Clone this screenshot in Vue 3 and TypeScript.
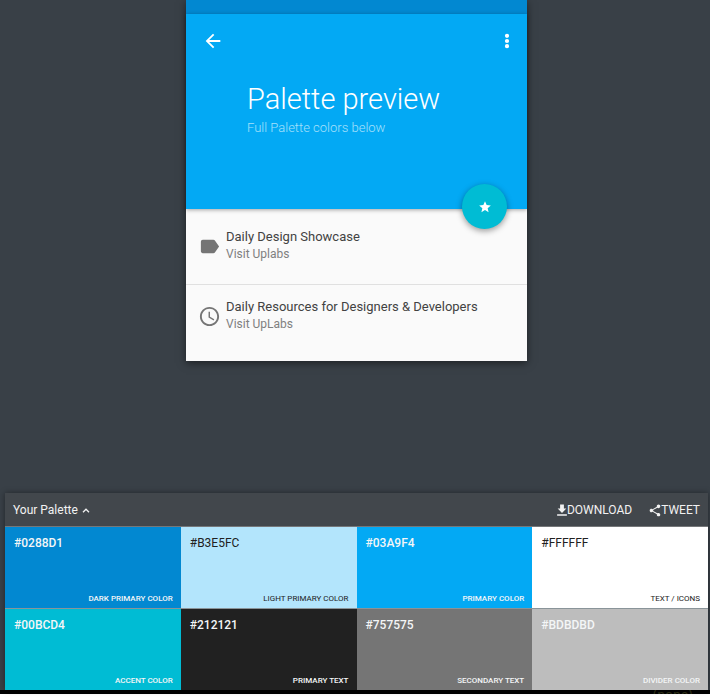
<script setup lang="ts">
interface Swatch {
  hex: string
  role: string
  tone: string
}

interface Entry {
  title: string
  note: string
  icon: string
}

const swatches: Swatch[] = [
  { hex: '#0288D1', role: 'Dark primary color', tone: 'light' },
  { hex: '#B3E5FC', role: 'Light primary color', tone: 'dark' },
  { hex: '#03A9F4', role: 'Primary color', tone: 'light' },
  { hex: '#FFFFFF', role: 'Text / Icons', tone: 'dark' },
  { hex: '#00BCD4', role: 'Accent color', tone: 'light' },
  { hex: '#212121', role: 'Primary text', tone: 'light' },
  { hex: '#757575', role: 'Secondary text', tone: 'light' },
  { hex: '#BDBDBD', role: 'Divider color', tone: 'light' },
]

const entries: Entry[] = [
  {
    title: 'Daily Design Showcase',
    note: 'Visit Uplabs',
    icon: 'M17.63 5.84C17.27 5.33 16.67 5 16 5L5 5.01C3.9 5.01 3 5.9 3 7v10c0 1.1.9 1.99 2 1.99L16 19c.67 0 1.27-.33 1.63-.84L22 12l-4.37-6.16z',
  },
  {
    title: 'Daily Resources for Designers & Developers',
    note: 'Visit UpLabs',
    icon: 'M11.99 2C6.47 2 2 6.48 2 12s4.47 10 9.99 10C17.52 22 22 17.52 22 12S17.52 2 11.99 2zM12 20c-4.42 0-8-3.58-8-8s3.58-8 8-8 8 3.58 8 8-3.58 8-8 8zm.5-13H11v6l5.25 3.15.75-1.23-4.5-2.67z',
  },
]
</script>

<template>
  <div class="page">
    <main class="stage">
      <section class="phone">
        <div class="status"></div>
        <header class="hero">
          <nav class="bar">
            <button class="icon-button" type="button" aria-label="Back">
              <svg viewBox="0 0 24 24" width="22" height="22"><path d="M20 11H7.83l5.59-5.59L12 4l-8 8 8 8 1.41-1.41L7.83 13H20v-2z" /></svg>
            </button>
            <button class="icon-button" type="button" aria-label="More">
              <svg viewBox="0 0 24 24" width="22" height="22"><path d="M12 8.6a2.3 2.3 0 1 0 0-4.6 2.3 2.3 0 0 0 0 4.6zm0 1.1a2.3 2.3 0 1 0 0 4.6 2.3 2.3 0 0 0 0-4.6zm0 5.7a2.3 2.3 0 1 0 0 4.6 2.3 2.3 0 0 0 0-4.6z" /></svg>
            </button>
          </nav>
          <h1>Palette preview</h1>
          <p>Full Palette colors below</p>
          <button class="fab" type="button" aria-label="Favorite">
            <svg viewBox="0 0 24 24" width="14" height="14"><path d="M12 17.27 18.18 21l-1.64-7.03L22 9.24l-7.19-.61L12 2 9.19 8.63 2 9.24l5.46 4.73L5.82 21z" /></svg>
          </button>
        </header>
        <ul class="entries">
          <li v-for="entry in entries" :key="entry.title">
            <svg viewBox="0 0 24 24" width="23" height="23"><path :d="entry.icon" /></svg>
            <div>
              <h2>{{ entry.title }}</h2>
              <a href="#">{{ entry.note }}</a>
            </div>
          </li>
        </ul>
      </section>
    </main>

    <section class="palette">
      <header class="palette-head">
        <button class="action toggle" type="button">
          Your Palette
          <svg viewBox="0 0 8 5" width="8" height="5"><path d="M1 4.2 4 1.2l3 3" /></svg>
        </button>
        <button class="action" type="button">
          <svg viewBox="3 0 18 24" width="10" height="13"><path d="M20 8.500h-4.500V1h-7v7.500H4l8 8 8-8zM3 19v2.500h18V19H3z" /></svg>DOWNLOAD
        </button>
        <button class="action" type="button">
          <svg viewBox="2 1 20 22" width="12" height="13"><path d="M18 16.080c-.76 0-1.440.3-1.960.770L8.910 12.700c.05-.23.09-.46.09-.7s-.04-.47-.09-.7l7.050-4.110c.54.5 1.250.81 2.040.81 1.660 0 3-1.340 3-3s-1.340-3-3-3-3 1.340-3 3c0 .24.04.47.09.7L8.040 9.810C7.500 9.310 6.790 9 6 9c-1.660 0-3 1.340-3 3s1.340 3 3 3c.79 0 1.500-.31 2.040-.81l7.120 4.160c-.05.21-.08.43-.08.65 0 1.610 1.310 2.920 2.920 2.920s2.920-1.310 2.920-2.920-1.310-2.920-2.920-2.920z" /></svg>TWEET
        </button>
      </header>
      <div class="swatches">
        <div
          v-for="swatch in swatches"
          :key="swatch.hex"
          class="swatch"
          :class="swatch.tone"
          :style="{ backgroundColor: swatch.hex }"
        >
          <span class="hex">{{ swatch.hex }}</span>
          <span class="role">{{ swatch.role }}</span>
        </div>
      </div>
    </section>
    <footer class="strip"><span>(none)</span></footer>
  </div>
</template>

<style>
body {
  margin: 0;
  background: #fff;
}
</style>

<style scoped>
.page {
  box-sizing: border-box;
  display: flex;
  flex-direction: column;
  min-height: 100vh;
  border-bottom: 5px solid #fff;
  background: #394047;
  font-family: Roboto, "Liberation Sans", sans-serif;
}

button {
  padding: 0;
  border: 0;
  background: none;
  color: inherit;
  font: inherit;
  cursor: pointer;
}

svg {
  display: block;
  flex: none;
  fill: currentColor;
}

.stage {
  flex: 1;
  display: flex;
  justify-content: center;
  align-items: flex-start;
  padding: 0 2px 132px 5px;
}

.phone {
  width: 100%;
  max-width: 341px;
  background: #fafafa;
  box-shadow: 0 2px 8px rgba(0, 0, 0, 0.5);
}

.status {
  height: 14px;
  background: #0288d1;
}

.hero {
  position: relative;
  box-sizing: border-box;
  height: 195px;
  padding: 16px 9px 0 16px;
  background: #03a9f4;
  color: #fff;
  box-shadow: 0 1px 4px rgba(0, 0, 0, 0.35);
}

.bar {
  display: flex;
  justify-content: space-between;
}

.hero h1 {
  margin: 29px 0 0 45px;
  font-size: 29px;
  font-weight: 300;
  line-height: 36px;
}

.hero p {
  margin: 2px 0 0 45px;
  color: #a6e0fb;
  font-size: 13px;
  font-weight: 300;
  line-height: 18px;
}

.fab {
  position: absolute;
  right: 20px;
  bottom: -20px;
  display: grid;
  place-items: center;
  width: 45px;
  height: 45px;
  border-radius: 50%;
  background: #00bcd4;
  box-shadow: 0 2px 6px rgba(0, 0, 0, 0.4);
}

.entries {
  margin: 0;
  padding: 0;
  list-style: none;
}

.entries li {
  display: flex;
  align-items: center;
  gap: 5px;
  box-sizing: border-box;
  height: 75px;
  padding: 0 12px 3px;
  color: #757575;
}

.entries li + li {
  height: 77px;
  padding-bottom: 15px;
  border-top: 1px solid #e0e0e0;
}

.entries svg {
  margin-top: 2px;
}

.entries h2 {
  margin: 0;
  color: #424242;
  font-size: 13px;
  font-weight: 400;
  line-height: 18px;
}

.entries a {
  display: block;
  color: #808080;
  font-size: 12px;
  line-height: 17px;
  text-decoration: none;
}

.palette {
  margin: 0 2px 0 5px;
  box-shadow: 0 0 6px rgba(0, 0, 0, 0.4);
}

.palette-head {
  display: flex;
  align-items: center;
  gap: 17px;
  box-sizing: border-box;
  height: 34px;
  padding: 1px 8px 0;
  border-bottom: 1px solid #757779;
  background: #42474c;
  color: #f2f2f2;
  font-size: 12px;
  line-height: 16px;
}

.action {
  display: flex;
  align-items: center;
}

.toggle {
  gap: 4px;
  margin-right: auto;
}

.toggle path {
  fill: none;
  stroke: currentColor;
  stroke-width: 1.3;
}

.swatches {
  display: grid;
  grid-template-columns: repeat(4, 1fr);
  grid-auto-rows: minmax(81px, auto);
  gap: 1px 0;
  background: #8a9499;
}

.swatch {
  display: flex;
  flex-direction: column;
  justify-content: space-between;
  padding: 8px 8px 4px 9px;
}

.hex {
  font-size: 12px;
  line-height: 16px;
}

.role {
  align-self: flex-end;
  font-size: 8px;
  line-height: 10px;
  text-transform: uppercase;
}

.light {
  color: #f4f6f7;
  font-weight: 500;
}

.dark {
  color: #212121;
}

.strip {
  display: flex;
  justify-content: flex-end;
  height: 4px;
  padding-right: 17px;
  overflow: hidden;
  background: #000;
  color: #292b12;
  font-size: 14px;
  line-height: 10px;
}
</style>
